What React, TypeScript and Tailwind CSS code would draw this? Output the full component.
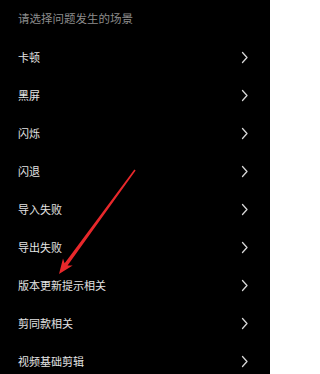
const ITEMS = [
  "卡顿",
  "黑屏",
  "闪烁",
  "闪退",
  "导入失败",
  "导出失败",
  "版本更新提示相关",
  "剪同款相关",
  "视频基础剪辑",
];

function Chevron() {
  return (
    <svg width="8" height="13" viewBox="0 0 8 13" fill="none" className="shrink-0">
      <path d="M1.5 1.5 L6 6.5 L1.5 11.5" stroke="#d6d6d6" strokeWidth="1.3" strokeLinecap="round" strokeLinejoin="round" />
    </svg>
  );
}

export default function App() {
  return (
    <div
      className="relative w-[270px] h-[374px] overflow-hidden bg-black"
      style={{ fontFamily: '"Noto Sans CJK SC", "Noto Sans", sans-serif' }}
    >
      <div className="h-[38px] flex items-center pl-[18px] text-[11.5px] text-[#8c8c8c]">
        请选择问题发生的场景
      </div>
      {ITEMS.map((label) => (
        <div key={label} className="h-[38px] flex items-center justify-between pl-[18px] pr-[21px]">
          <span className="text-[11px] text-[#e4e4e4]">{label}</span>
          <Chevron />
        </div>
      ))}
      {/* red annotation arrow */}
      <svg className="absolute left-0 top-0 pointer-events-none" width="270" height="374" viewBox="0 0 270 374">
        <polygon
          points="135.65,170.47 67.55,265.4 72.7,265.4 59,274 63,258.4 64.65,263.2 134.35,169.53"
          fill="#e8282b"
        />
      </svg>
    </div>
  );
}
